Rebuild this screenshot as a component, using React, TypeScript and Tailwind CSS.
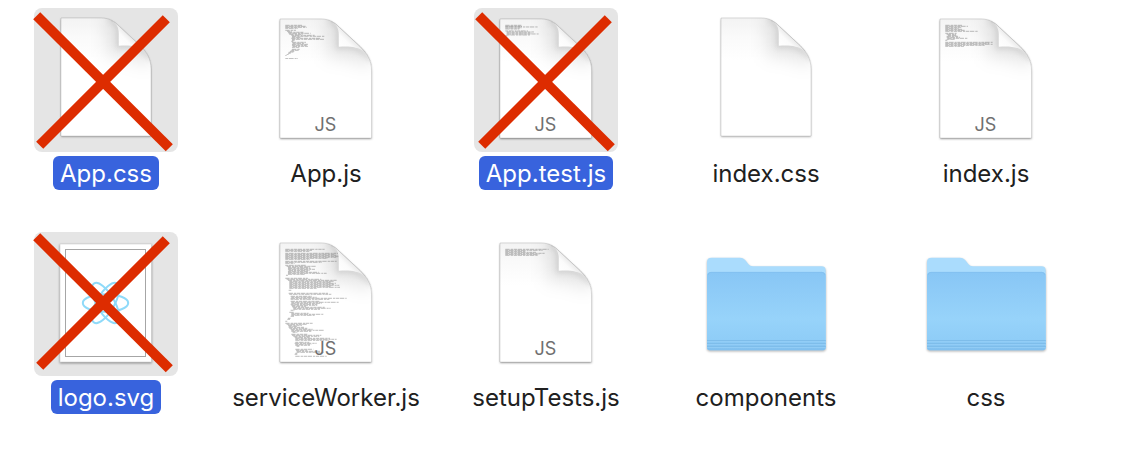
import { useId, type ReactNode } from "react";

type Row = [x: number, y: number, width: number];

type Item = {
  name: string;
  kind: "css" | "js" | "image" | "folder";
  selected?: boolean;
  crossed?: { dx: number; dy: number };
  preview?: Row[];
};

const appPreview: Row[] = [
  [0, 0, 50], [0, 3, 62], [0, 6, 64], [0, 9, 38], [0, 15, 32], [5, 18, 14], [8, 21, 46], [10, 24, 66],
  [12, 27, 40], [18, 30, 70], [20, 33, 98], [20, 36, 26], [18, 39, 86], [20, 42, 96], [20, 45, 8], [18, 48, 6],
  [20, 51, 42], [22, 54, 36], [20, 57, 48], [20, 60, 44], [22, 63, 46], [20, 66, 22], [20, 72, 24], [18, 75, 22],
  [14, 78, 16], [10, 81, 14], [8, 84, 8], [4, 88, 6], [0, 91, 4], [0, 100, 38],
];

const testPreview: Row[] = [
  [0, 0, 48], [0, 3, 50], [0, 5, 98], [0, 8, 48], [0, 11, 42],
  [0, 17, 68], [4, 20, 82], [4, 23, 74], [4, 26, 96], [4, 29, 72], [0, 32, 6],
];

const indexPreview: Row[] = [
  [0, 0, 50], [0, 3, 68], [0, 6, 48], [0, 9, 40], [0, 12, 50], [0, 15, 58], [0, 18, 98],
  [0, 24, 34], [4, 27, 28], [8, 30, 26], [4, 33, 34], [4, 36, 40], [6, 39, 62], [4, 42, 24], [0, 45, 6],
  [0, 51, 142], [0, 54, 132], [0, 57, 144], [0, 60, 118], [0, 63, 56],
];

const workerPreview: Row[] = [
  [0, 0, 118], [0, 3, 80], [0, 6, 72], [0, 12, 158], [0, 15, 150], [0, 18, 156], [0, 21, 160], [0, 24, 156],
  [0, 27, 128], [0, 30, 74], [0, 36, 154], [0, 39, 110], [0, 42, 28], [0, 48, 62], [4, 51, 88], [8, 54, 66],
  [8, 57, 68], [8, 60, 82], [10, 63, 64], [8, 66, 60], [8, 69, 92], [8, 72, 116], [8, 75, 50], [2, 78, 6],
  [0, 87, 68], [4, 90, 104], [8, 93, 148], [12, 96, 136], [12, 99, 124], [12, 102, 140], [12, 105, 134],
  [12, 108, 150], [12, 111, 126], [12, 114, 152], [12, 117, 82], [10, 123, 8], [10, 132, 118], [12, 135, 126],
  [16, 141, 64], [18, 144, 76], [16, 147, 168], [16, 150, 116], [16, 156, 86], [18, 159, 144], [18, 162, 92],
  [16, 165, 80], [18, 168, 78], [20, 171, 42], [22, 174, 96], [24, 177, 112], [24, 180, 80], [16, 183, 12],
  [12, 189, 16], [18, 192, 52], [18, 195, 96], [18, 198, 70], [16, 201, 10], [8, 207, 8], [6, 210, 8],
  [0, 216, 6], [0, 222, 82], [4, 225, 60], [8, 228, 42], [10, 231, 28], [10, 234, 46], [12, 237, 54],
  [16, 240, 66], [18, 243, 98], [18, 246, 60], [22, 249, 14], [18, 255, 48], [20, 258, 88], [24, 261, 78],
  [28, 264, 46], [30, 267, 104], [30, 270, 124], [30, 273, 102], [30, 279, 42], [28, 282, 66], [30, 285, 48],
  [30, 288, 44], [34, 291, 8], [30, 300, 54], [32, 303, 36], [34, 306, 70], [34, 309, 82], [30, 312, 6],
  [28, 315, 8], [30, 321, 94],
];

const setupPreview: Row[] = [
  [0, 0, 130], [0, 3, 112], [0, 6, 60], [0, 9, 92], [0, 12, 118], [0, 15, 102], [0, 18, 98],
];

const items: Item[] = [
  { name: "App.css", kind: "css", selected: true, crossed: { dx: 0, dy: 0 } },
  { name: "App.js", kind: "js", preview: appPreview },
  { name: "App.test.js", kind: "js", selected: true, crossed: { dx: 2, dy: 0 }, preview: testPreview },
  { name: "index.css", kind: "css" },
  { name: "index.js", kind: "js", preview: indexPreview },
  { name: "logo.svg", kind: "image", selected: true, crossed: { dx: 0, dy: -3 } },
  { name: "serviceWorker.js", kind: "js", preview: workerPreview },
  { name: "setupTests.js", kind: "js", preview: setupPreview },
  { name: "components", kind: "folder" },
  { name: "css", kind: "folder" },
];

function Canvas({ children }: { children: ReactNode }) {
  return (
    <svg viewBox="0 0 144 144" className="size-full overflow-visible" aria-hidden="true">
      {children}
    </svg>
  );
}

function CodePreview({ rows }: { rows: Row[] }) {
  return (
    <g transform="translate(31.3 17.3) scale(0.3333)" stroke="#6a6a6a" strokeWidth="1.7">
      {rows.map(([x, y, width], i) => (
        <line
          key={i}
          x1={x}
          x2={x + width}
          y1={y}
          y2={y}
          strokeDasharray={i % 2 ? "9 2 14 3 6 2" : "13 3 7 2 10 2"}
          opacity="0.8"
        />
      ))}
    </g>
  );
}

function DocumentIcon({ kind, preview }: { kind: "css" | "js"; preview?: Row[] }) {
  const id = useId();
  const js = kind === "js";
  const page = js
    ? "M26 11H67C76 11 80.500 14.500 85.500 19.500L106 38.500C113.500 45.500 117.500 52 117.500 63V130H26Z"
    : "M27 10H67C76 10 80.500 13.500 85.500 18.500L106 37.500C113 44 117 51 117 61V128H27Z";
  const curl = "M74 12C82 15 85 20 84.800 27V38.700C94 38 105 38 117 52";
  return (
    <Canvas>
      <defs>
        <linearGradient id={`${id}top`} x1="0" y1="0" x2="0" y2="1">
          <stop offset="0" stopColor="#f3f3f3" />
          <stop offset="0.16" stopColor="#fafafa" />
          <stop offset="0.36" stopColor="#ffffff" />
        </linearGradient>
        <linearGradient id={`${id}flap`} gradientUnits="userSpaceOnUse" x1="85" y1="39" x2="96" y2="28">
          <stop offset="0" stopColor="#ffffff" />
          <stop offset="0.6" stopColor="#fbfbfb" />
          <stop offset="1" stopColor="#e8e8e8" />
        </linearGradient>
        <filter id={`${id}shadow`} x="-10%" y="-10%" width="120%" height="120%">
          <feDropShadow dx="0" dy="1" stdDeviation="1" floodColor="#000" floodOpacity={js ? 0.38 : 0.28} />
        </filter>
        <filter id={`${id}near`} filterUnits="userSpaceOnUse" x="20" y="-20" width="140" height="130">
          <feGaussianBlur stdDeviation="2.5" />
        </filter>
        <filter id={`${id}far`} filterUnits="userSpaceOnUse" x="20" y="-20" width="140" height="130">
          <feGaussianBlur stdDeviation="9" />
        </filter>
        <clipPath id={`${id}clip`}>
          <path d={page} />
        </clipPath>
      </defs>
      <path d={page} fill={`url(#${id}top)`} filter={`url(#${id}shadow)`} />
      <g clipPath={`url(#${id}clip)`}>
        <g fill="none" stroke="#000" transform={js ? undefined : "translate(0 -1)"}>
          <path d={curl} strokeWidth="22" strokeOpacity="0.1" filter={`url(#${id}far)`} />
          <path d={curl} strokeWidth="5" strokeOpacity="0.09" filter={`url(#${id}near)`} />
        </g>
      </g>
      <path d={page} fill="none" stroke="#000" strokeOpacity="0.15" strokeWidth="0.8" />
      {preview && <CodePreview rows={preview} />}
      <g transform={js ? undefined : "translate(0 -1)"}>
        <path
          d="M77 13.500C82 16 85 20 84.800 27V38.700C94 38 103 38 111 44L106 38.500L85.500 19.500C83 17 80 14.500 77 13.500Z"
          fill={`url(#${id}flap)`}
        />
        <path d="M77 13.500C80 14.500 83 17 85.500 19.500L106 38.500L111 44" fill="none" stroke="#c4c4c4" strokeWidth="0.9" />
      </g>
      {js && (
        <text
          x="71.500"
          y="123"
          textAnchor="middle"
          fill="#707070"
          className="font-['Inter',sans-serif] text-[18px] font-normal"
        >
          JS
        </text>
      )}
    </Canvas>
  );
}

function ImageIcon() {
  return (
    <Canvas>
      <rect
        x="26"
        y="12"
        width="91.300"
        height="118"
        fill="#fff"
        stroke="#d0d0d0"
        strokeWidth="0.6"
        className="drop-shadow-[0_1px_1px_rgba(0,0,0,0.4)]"
      />
      <rect x="31.500" y="17.500" width="80" height="107" fill="none" stroke="#a6a6a6" />
      <g fill="none" stroke="#8fdaf9" strokeWidth="2">
        <ellipse cx="71.500" cy="71" rx="22.700" ry="8.800" />
        <ellipse cx="71.500" cy="71" rx="22.700" ry="8.800" transform="rotate(60 71.500 71)" />
        <ellipse cx="71.500" cy="71" rx="22.700" ry="8.800" transform="rotate(120 71.500 71)" />
      </g>
      <circle cx="71.500" cy="71" r="4" fill="#8fdaf9" />
    </Canvas>
  );
}

function FolderIcon() {
  const id = useId();
  return (
    <Canvas>
      <defs>
        <linearGradient id={`${id}front`} x1="0" y1="0" x2="0" y2="1">
          <stop offset="0" stopColor="#88c6f5" />
          <stop offset="0.6" stopColor="#97d3fa" />
          <stop offset="0.86" stopColor="#8fcdf7" />
          <stop offset="1" stopColor="#80bfee" />
        </linearGradient>
      </defs>
      <g className="drop-shadow-[0_1px_1px_rgba(0,0,0,0.3)]">
        <path
          d="M13 30Q13 25.700 17.500 25.700H46C49 25.700 50.500 27 52 29L54.500 32.300Q56 34.300 59 34.300H127.500Q131.700 34.300 131.700 38.500V115.500Q131.700 118.300 129 118.300H15.700Q13 118.300 13 115.500Z"
          fill="#aadcfd"
        />
        <path
          d="M13 44Q13 40 17 40H127.700Q131.700 40 131.700 44V115.500Q131.700 118.300 129 118.300H15.700Q13 118.300 13 115.500Z"
          fill={`url(#${id}front)`}
        />
      </g>
      <path d="M14 43Q14.500 40.300 17 40.300H127.700Q130.500 40.300 131 43" fill="none" stroke="#7dbceb" strokeWidth="0.6" />
      <path d="M13 108.500H131.700M13 111.500H131.700M13 114.500H131.700" stroke="#7ebdea" strokeWidth="1" />
      <path d="M13 109.500H131.700M13 112.500H131.700M13 115.500H131.700" stroke="#94cef6" strokeWidth="0.8" />
    </Canvas>
  );
}

function Cross({ dx, dy }: { dx: number; dy: number }) {
  return (
    <span className="absolute inset-0">
      <Canvas>
        <g transform={`translate(${dx} ${dy})`} stroke="#dd2c00" strokeWidth="10">
          <line x1="2.700" y1="7.800" x2="135.300" y2="139.700" />
          <line x1="5.700" y1="137.300" x2="132.300" y2="10.700" />
        </g>
      </Canvas>
    </span>
  );
}

function FileTile({ item }: { item: Item }) {
  return (
    <li className="flex justify-center">
      <button type="button" aria-pressed={!!item.selected} className="flex flex-col items-center gap-1">
        <span className={`relative block size-36 rounded-lg ${item.selected ? "bg-[#e5e5e5]" : ""}`}>
          {item.kind === "folder" && <FolderIcon />}
          {item.kind === "image" && <ImageIcon />}
          {(item.kind === "css" || item.kind === "js") && <DocumentIcon kind={item.kind} preview={item.preview} />}
          {item.crossed && <Cross dx={item.crossed.dx} dy={item.crossed.dy} />}
        </span>
        <span
          className={`rounded-md px-[7px] pt-0.5 text-2xl leading-8 font-normal whitespace-nowrap ${
            item.selected ? "bg-[#3863dd] text-white" : "text-[#202020]"
          }`}
        >
          {item.name}
        </span>
      </button>
    </li>
  );
}

export default function App() {
  return (
    <main className="min-h-screen bg-white pt-2 pr-8 pb-11 pl-[34px] font-['Inter',sans-serif]">
      <ul className="grid grid-cols-[repeat(auto-fill,144px)] gap-x-[76px] gap-y-[42px]" aria-label="Files">
        {items.map((item) => (
          <FileTile key={item.name} item={item} />
        ))}
      </ul>
    </main>
  );
}
